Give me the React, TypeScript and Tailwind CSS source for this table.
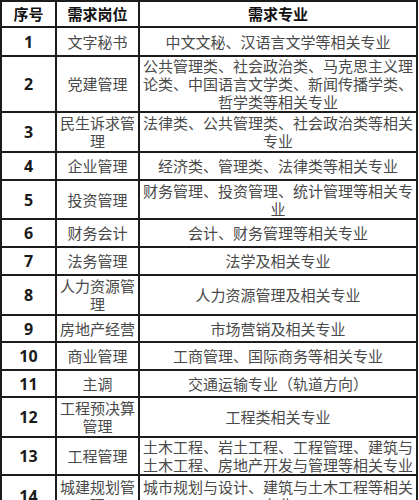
import React from 'react';

interface Row {
  no: string;
  post: string;
  major: string;
}

const rows: Row[] = [
  { no: '1', post: '文字秘书', major: '中文文秘、汉语言文学等相关专业' },
  {
    no: '2',
    post: '党建管理',
    major: '公共管理类、社会政治类、马克思主义理论类、中国语言文学类、新闻传播学类、哲学类等相关专业',
  },
  { no: '3', post: '民生诉求管理', major: '法律类、公共管理类、社会政治类等相关专业' },
  { no: '4', post: '企业管理', major: '经济类、管理类、法律类等相关专业' },
  { no: '5', post: '投资管理', major: '财务管理、投资管理、统计管理等相关专业' },
  { no: '6', post: '财务会计', major: '会计、财务管理等相关专业' },
  { no: '7', post: '法务管理', major: '法学及相关专业' },
  { no: '8', post: '人力资源管理', major: '人力资源管理及相关专业' },
  { no: '9', post: '房地产经营', major: '市场营销及相关专业' },
  { no: '10', post: '商业管理', major: '工商管理、国际商务等相关专业' },
  { no: '11', post: '主调', major: '交通运输专业（轨道方向）' },
  { no: '12', post: '工程预决算管理', major: '工程类相关专业' },
  {
    no: '13',
    post: '工程管理',
    major: '土木工程、岩土工程、工程管理、建筑与土木工程、房地产开发与管理等相关专业',
  },
  { no: '14', post: '城建规划管理', major: '城市规划与设计、建筑与土木工程等相关专业' },
];

const cjk = { fontFamily: '"Noto Sans CJK SC", "Noto Sans", sans-serif' };
const num = { fontFamily: '"Open Sans", "Liberation Sans", sans-serif' };

export default function App() {
  return (
    <div className="w-[419px] h-[500px] overflow-hidden bg-white">
      <div
        className="grid w-[418px] grid-cols-[53px_81px_276px] grid-rows-[24px_27px_54px_38px_26px_37px_26px_26px_38px_25px_26px_25px_38px_36px_40px] gap-[2px] p-[2px] bg-[#1c1c1c]"
        style={cjk}
      >
        <div className="flex items-center justify-center bg-white text-[15px] font-bold text-[#111]">序号</div>
        <div className="flex items-center justify-center bg-white text-[15px] font-bold text-[#111]">需求岗位</div>
        <div className="flex items-center justify-center bg-white text-[15px] font-bold text-[#111]">需求专业</div>
        {rows.map((r) => (
          <React.Fragment key={r.no}>
            <div
              className="flex items-center justify-center bg-white text-[16px] font-bold text-[#1a1a1a]"
              style={num}
            >
              {r.no}
            </div>
            <div className="flex items-center justify-center bg-white px-[3px] text-center text-[15px] leading-[18px] text-[#4a4a4a]">
              {r.post}
            </div>
            <div className="flex items-center justify-center bg-white px-[3px] text-center text-[15px] leading-[18px] text-[#4a4a4a]">
              {r.major}
            </div>
          </React.Fragment>
        ))}
      </div>
    </div>
  );
}
